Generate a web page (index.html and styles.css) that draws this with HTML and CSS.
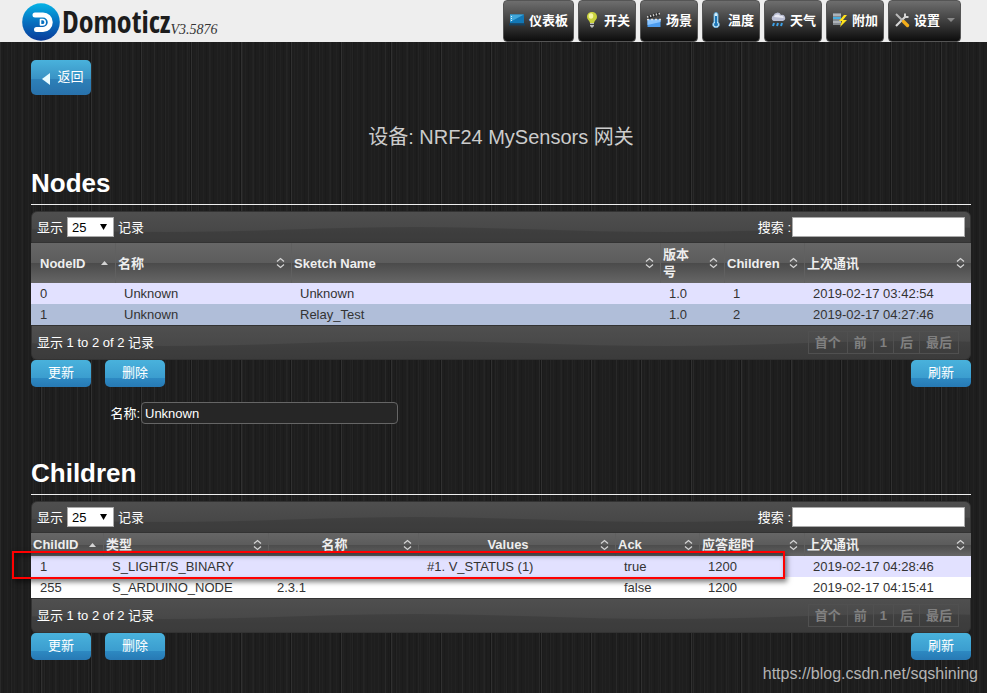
FILE: index.html
```html
<!DOCTYPE html>
<html lang="zh-CN">
<head>
<meta charset="utf-8">
<meta name="viewport" content="width=device-width, initial-scale=1">
<title>Domoticz</title>
<link rel="stylesheet" href="styles.css">
</head>
<body>
<svg class="sprite" aria-hidden="true">
  <symbol id="sort-both" viewBox="0 0 9 12"><path d="M1 4.500 4.500 1.500 8 4.500M1 7.500 4.500 10.500 8 7.500" fill="none" stroke="#d4d4d4" stroke-width="1.300"/></symbol>
  <symbol id="sort-asc" viewBox="0 0 9 12"><path d="M1 8 4.500 4 8 8Z" fill="#d4d4d4"/></symbol>
</svg>
<header class="topbar">
  <a class="brand" href="#">
    <svg class="brand-mark" viewBox="0 0 38 38" aria-hidden="true">
      <defs><linearGradient id="g-logo" x1="0" y1="0" x2="0" y2="1"><stop offset="0" stop-color="#05b3e6"/><stop offset=".5" stop-color="#0670c0"/><stop offset="1" stop-color="#0a3c9a"/></linearGradient></defs>
      <circle cx="19" cy="19" r="18.800" fill="url(#g-logo)"/>
      <path d="M13 12h8a7 7 0 0 1 0 14.500h-6.500" fill="none" stroke="#fff" stroke-width="5" stroke-linecap="round"/>
      <path d="M18.500 16.500h2a2.700 2.700 0 0 1 0 5.400h-2z" fill="#0670c0" stroke="#fff" stroke-width="1.600" stroke-linejoin="round"/>
    </svg>
    <span class="brand-name">Domoticz</span><span class="brand-version">V3.5876</span>
  </a>
  <nav class="menu">
    <a href="#"><svg viewBox="0 0 16 16"><path d="M1 2.500h14v9H1z" fill="#1277b5"/><path d="M1 2.500h14L1 10z" fill="#41a8dc"/><path d="M0 11.500h16v2H0z" fill="#17415f"/><path d="M2.500 4v6" stroke="#d9f3ff" stroke-dasharray="1 1"/></svg>仪表板</a>
    <a href="#"><svg viewBox="0 0 16 16"><path d="M8 0C4.700 0 3 2.300 3 5c0 2.500 2.500 3.500 3 6h4c.5-2.500 3-3.500 3-6 0-2.700-1.700-5-5-5z" fill="#c9d23d"/><ellipse cx="7" cy="4" rx="2.300" ry="2.800" fill="#f4f6a4"/><path d="M6 11h4v3L8 16l-2-2z" fill="#b9b9b9"/><path d="M6 12.500h4" stroke="#444"/></svg>开关</a>
    <a href="#"><svg viewBox="0 0 16 16"><path d="M1.500 7.500h13V15h-13z" fill="#4d9df0"/><path d="M1.500 7.500h13v2.500l-13 3z" fill="#8cc6ff"/><path d="M1 5.500 14 1.500" stroke="#222" stroke-width="3"/><path d="M1 5 14 1.500" stroke="#ccc" stroke-width="2" stroke-dasharray="1.500 1.500"/><path d="M1 7.500h14" stroke="#ddd" stroke-width="1.500" stroke-dasharray="2 2"/></svg>场景</a>
    <a href="#"><svg viewBox="0 0 16 16"><path d="M6 2.500a2 2 0 0 1 4 0V10a3.300 3.300 0 1 1-4 0z" fill="#d7eefa" stroke="#5fa7d4"/><path d="M8 4v8" stroke="#1b76b8" stroke-width="2"/><circle cx="8" cy="12.500" r="2" fill="#1b76b8"/></svg>温度</a>
    <a href="#"><svg viewBox="0 0 16 16"><path d="M3.500 9a3 3 0 0 1 0-5.500A4 4 0 0 1 11 3a3 3 0 0 1 2 6z" fill="#b9bdd2"/><path d="M4 5c1-3 5-3 6-1 2-1 4 1 3.500 2z" fill="#e8e9f2"/><path d="m4 11-1 3M8 11l-1 3M12 11l-1 3" stroke="#3ba0e8" stroke-width="2"/></svg>天气</a>
    <a href="#"><svg viewBox="0 0 16 16"><path d="M1 1h8v12H1z" fill="#858b91"/><path d="M1 3h8M1 10h8" stroke="#d5dade"/><path d="M1 6h8" stroke="#49aee0" stroke-width="2"/><path d="m12 3-5 6h3l-2 6 7-7h-4l4-5z" fill="#ffe21c"/></svg>附加</a>
    <a href="#"><svg viewBox="0 0 16 16"><path d="M2 14 12 4" stroke="#d6d6d6" stroke-width="2.200"/><path d="M11 1.500v3.500h3.500" fill="none" stroke="#d6d6d6" stroke-width="2"/><path d="m2 2 7 7" stroke="#bbb" stroke-width="2"/><path d="m9.500 9.500 4 4" stroke="#f4ae1b" stroke-width="3.400" stroke-linecap="round"/></svg>设置<span class="caret"></span></a>
  </nav>
</header>

<main class="page">
  <button class="btn btn-back" type="button"><svg viewBox="0 0 8 12" aria-hidden="true"><path d="M8 0v12L0 6z" fill="#e8fbff"/></svg>返回</button>
  <h1 class="title">设备: NRF24 MySensors 网关</h1>

  <section>
    <h2>Nodes</h2>
    <div class="bar bar-top">
      <label class="length">显示 <span class="select"><select><option>25</option><option>50</option><option>100</option></select></span> 记录</label>
      <label class="search">搜索 :<input type="text"></label>
    </div>
    <table class="grid nodes">
      <colgroup><col class="c-84"><col class="c-176"><col><col class="c-64"><col class="c-80"><col class="c-167"></colgroup>
      <thead><tr>
        <th>NodeID<svg><use href="#sort-asc"/></svg></th>
        <th>名称<svg><use href="#sort-both"/></svg></th>
        <th>Sketch Name<svg><use href="#sort-both"/></svg></th>
        <th class="narrow">版本号<svg><use href="#sort-both"/></svg></th>
        <th>Children<svg><use href="#sort-both"/></svg></th>
        <th>上次通讯<svg><use href="#sort-both"/></svg></th>
      </tr></thead>
      <tbody>
        <tr class="odd"><td>0</td><td>Unknown</td><td>Unknown</td><td>1.0</td><td>1</td><td>2019-02-17 03:42:54</td></tr>
        <tr class="selected"><td>1</td><td>Unknown</td><td>Relay_Test</td><td>1.0</td><td>2</td><td>2019-02-17 04:27:46</td></tr>
      </tbody>
    </table>
    <div class="bar bar-bottom">
      <span>显示 1 to 2 of 2 记录</span>
      <div class="pager"><button type="button">首个</button><button type="button">前</button><button type="button">1</button><button type="button">后</button><button type="button">最后</button></div>
    </div>
    <div class="actions">
      <button class="btn" type="button">更新</button>
      <button class="btn" type="button">删除</button>
      <button class="btn btn-refresh" type="button">刷新</button>
    </div>
    <div class="field">
      <label for="node-name">名称:</label>
      <input id="node-name" type="text" value="Unknown">
    </div>
  </section>

  <section>
    <h2>Children</h2>
    <div class="bar bar-top">
      <label class="length">显示 <span class="select"><select><option>25</option><option>50</option><option>100</option></select></span> 记录</label>
      <label class="search">搜索 :<input type="text"></label>
    </div>
    <div class="marked">
      <table class="grid children">
        <colgroup><col class="c-72"><col class="c-165"><col class="c-150"><col><col class="c-84"><col class="c-105"><col class="c-167"></colgroup>
        <thead><tr>
          <th>ChildID<svg><use href="#sort-asc"/></svg></th>
          <th>类型<svg><use href="#sort-both"/></svg></th>
          <th class="center">名称<svg><use href="#sort-both"/></svg></th>
          <th class="center">Values<svg><use href="#sort-both"/></svg></th>
          <th>Ack<svg><use href="#sort-both"/></svg></th>
          <th>应答超时<svg><use href="#sort-both"/></svg></th>
          <th>上次通讯<svg><use href="#sort-both"/></svg></th>
        </tr></thead>
        <tbody>
          <tr class="odd"><td>1</td><td>S_LIGHT/S_BINARY</td><td></td><td>#1. V_STATUS (1)</td><td>true</td><td>1200</td><td>2019-02-17 04:28:46</td></tr>
          <tr class="even"><td>255</td><td>S_ARDUINO_NODE</td><td>2.3.1</td><td></td><td>false</td><td>1200</td><td>2019-02-17 04:15:41</td></tr>
        </tbody>
      </table>
      <div class="highlight"></div>
    </div>
    <div class="bar bar-bottom">
      <span>显示 1 to 2 of 2 记录</span>
      <div class="pager"><button type="button">首个</button><button type="button">前</button><button type="button">1</button><button type="button">后</button><button type="button">最后</button></div>
    </div>
    <div class="actions">
      <button class="btn" type="button">更新</button>
      <button class="btn" type="button">删除</button>
      <button class="btn btn-refresh" type="button">刷新</button>
    </div>
  </section>
</main>
<div class="watermark">https://blog.csdn.net/sqshining</div>
</body>
</html>
```
FILE: styles.css
```css
* { box-sizing: border-box; }

body {
  position: relative;
  min-height: 100vh;
  margin: 0;
  color: #fff;
  font: 13px/17px "Liberation Sans", "Noto Sans CJK SC", sans-serif;
  background-color: #1e1e1e;
  background-image:
    repeating-linear-gradient(90deg, transparent 0 40px, #161616 40px 41px, #303030 41px 42px, transparent 42px 50px),
    repeating-linear-gradient(90deg, rgba(255,255,255,.02) 0 1px, transparent 1px 3px, rgba(0,0,0,.1) 3px 4px, transparent 4px 7px),
    repeating-linear-gradient(90deg, rgba(255,255,255,.03) 0 1px, transparent 1px 11px);
}

button, input, select { font: inherit; }
.sprite { position: absolute; width: 0; height: 0; }

.topbar {
  display: flex;
  justify-content: space-between;
  height: 42px;
  padding: 0 26px 0 22px;
  background: #eee;
}
.brand { display: flex; align-items: center; color: #1c1c1c; text-decoration: none; }
.brand-mark { width: 38px; height: 38px; margin-top: 2px; }
.brand-name {
  margin: 2px 0 0 2px;
  font: bold 30px/42px "Open Sans Condensed", "Roboto Condensed", sans-serif;
}
.brand-version { align-self: flex-end; font: italic 14px/24px "Liberation Serif", serif; color: #333; }

.menu { display: flex; gap: 4px; }
.menu a {
  display: flex;
  align-items: center;
  gap: 4px;
  padding: 0 5px 2px;
  border: 1px solid #555;
  border-radius: 4px;
  background: linear-gradient(#6e6e6e, #3f3f3f 50%, #0d0d0d);
  color: #fff;
  font-weight: bold;
  text-decoration: none;
  white-space: nowrap;
}
.menu svg { width: 16px; height: 16px; }
.caret { margin-left: 3px; border: 4px solid transparent; border-top-color: #888; border-bottom: 0; }

.page { padding: 18px 16px 33px 31px; }

.btn {
  min-width: 60px;
  height: 27px;
  padding: 0 0 2px;
  border: 0;
  border-radius: 5px;
  background: linear-gradient(#49b2dc, #3b9dcf 66%, #2d89c2 67%, #2779b4);
  color: #fff;
}
.btn-back {
  display: flex;
  align-items: center;
  justify-content: center;
  gap: 7px;
  height: 35px;
  padding-left: 4px;
  background: linear-gradient(#49b2dc, #3992c4 54%, #2d80b8 55%, #2871ab);
}
.btn-back svg { width: 8px; height: 12px; margin-top: 4px; }

.title { margin: 30px 0 0; color: #ccc; font-size: 20px; font-weight: normal; line-height: 24px; text-align: center; }
h2 { margin: 14px 0 6px; border-bottom: 1px solid #eee; font-size: 26px; line-height: 41px; }
section + section h2 { margin-top: 29px; }

.bar {
  display: flex;
  justify-content: space-between;
  align-items: center;
  border: 1px solid #333;
  background:
    url("data:image/svg+xml,%3Csvg xmlns='http://www.w3.org/2000/svg' width='500' height='40'%3E%3Cpath d='M-116 15C-30 15 50 20 134 20S300 15 384 15S550 20 634 20V40H-116Z' fill-opacity='.12'/%3E%3C/svg%3E") 0 0 repeat-x,
    linear-gradient(#4f4f4f, #434343);
}
.bar-top { height: 32px; padding: 0 5px; border-radius: 6px 6px 0 0; }
.bar-bottom { height: 35px; padding: 0 12px 0 5px; border-radius: 0 0 6px 6px; }
.length, .search { display: flex; align-items: center; gap: 4px; }
.search { gap: 1px; }
.search input { width: 173px; height: 20px; border: 1px solid #aaa; background: #fff; }

.select { position: relative; }
.select select {
  display: block;
  width: 47px;
  height: 20px;
  padding: 0 4px;
  appearance: none;
  border: 1px solid #aaa;
  border-radius: 0;
  background: #fff;
  color: #000;
}
.select::after {
  content: "";
  position: absolute;
  top: 7px;
  right: 7px;
  width: 7px;
  height: 6px;
  background: #000;
  clip-path: polygon(0 0, 100% 0, 50% 100%);
  pointer-events: none;
}

.grid { width: 100%; table-layout: fixed; border-collapse: separate; border-spacing: 0; }
.grid th {
  position: relative;
  padding: 3px 20px 3px 2px;
  border-left: 1px solid #606060;
  background: linear-gradient(#666, #5c5c5c 50%, #4b4b4b 51%, #666);
  color: #eee;
  line-height: 17px;
  text-align: left;
}
.grid th:first-child { border-left: 0; }
.grid th.center { text-align: center; }
.grid th.narrow { padding-right: 28px; }
.grid th svg { position: absolute; top: calc(50% - 6px); right: 6px; width: 9px; height: 12px; }
.nodes th:first-child { padding-left: 9px; }
.grid td { height: 21px; padding: 0 9px; color: #333; white-space: nowrap; }
.odd { background: #e2e1ff; }
.even { background: #fff; }
.selected { background: #b0bed9; }

.c-64 { width: 64px; }
.c-72 { width: 72px; }
.c-80 { width: 80px; }
.c-84 { width: 84px; }
.c-105 { width: 105px; }
.c-150 { width: 150px; }
.c-165 { width: 165px; }
.c-167 { width: 167px; }
.c-176 { width: 176px; }

.pager { display: flex; align-items: center; }
.pager button {
  height: 23px;
  padding: 0 6px;
  border: 1px solid #505050;
  margin-right: -1px;
  background: transparent;
  color: #808080;
  font-weight: bold;
}

.actions { display: flex; gap: 14px; }
.btn-refresh { margin-left: auto; }

.field { display: flex; align-items: center; gap: 1px; margin-top: 15px; }
.field label { width: 109px; text-align: right; }
.field input {
  width: 257px;
  height: 22px;
  padding: 0 3px;
  border: 1px solid #666;
  border-radius: 4px;
  background: #262626;
  color: #fff;
}

.marked { position: relative; }
.highlight {
  position: absolute;
  top: 18px;
  left: -19px;
  right: 186px;
  height: 28px;
  border: 2px solid #f00;
  box-shadow: 2px 3px 5px rgba(0,0,0,.5), inset 2px 3px 5px rgba(0,0,0,.4);
}

.watermark { position: absolute; right: 9px; bottom: 9px; color: #b4b4b4; font-size: 16px; line-height: 20px; }
```
